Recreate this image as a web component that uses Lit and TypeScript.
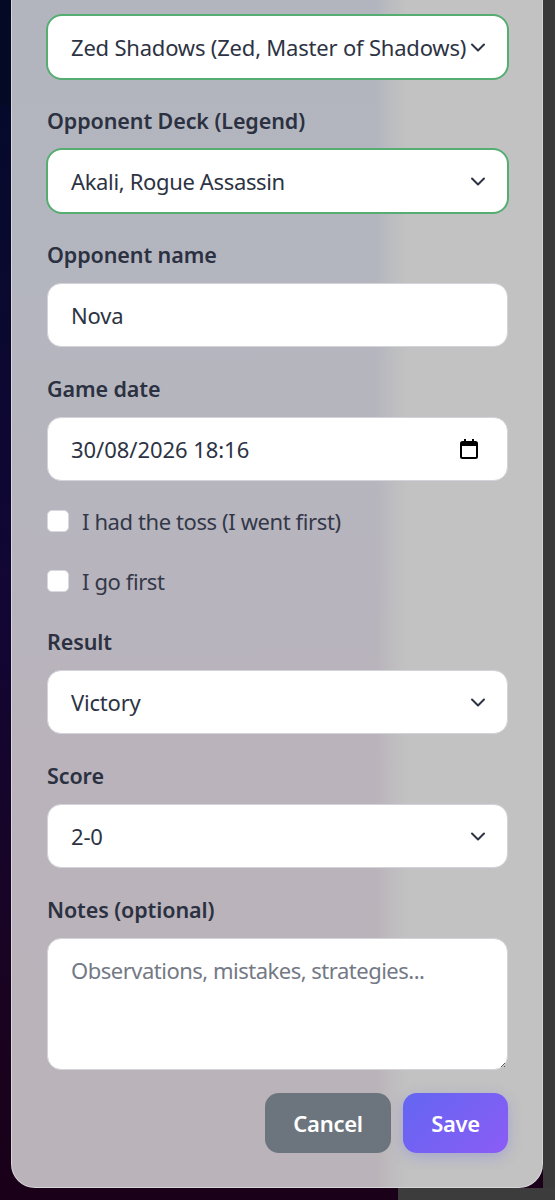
import { LitElement, html, css } from "lit";
import { customElement } from "lit/decorators.js";

const chevron = html`<svg class="chev" viewBox="0 0 16 16" width="16" height="16" fill="none" stroke="#2d3343" stroke-width="2" stroke-linecap="round" stroke-linejoin="round"><path d="M2 5.500l6 6 6-6"/></svg>`;

@customElement("app-root")
export class AppRoot extends LitElement {
  static styles = css`
    :host { display: block; width: 555px; height: 1200px; overflow: hidden; position: relative;
      font-family: "Noto Sans", "Open Sans", sans-serif; color: #2d3343;
      background:
        linear-gradient(90deg, transparent 0 543px, #3a3a3a 543px),
        linear-gradient(180deg, #050a24 0 105px, #050a2c 105px, #120635 50%, #1a0320 85%, #1a0018 100%); }
    .bottomright { position: absolute; left: 398px; right: 0; top: 1188px; bottom: 0; background: #3c3c3c; }
    .modal { position: relative; box-sizing: border-box; width: 532px; margin: -27px 0 0 11px; height: 1215px; padding: 0 34px 0 35px;
      border: 1px solid #d6d6da; border-top: 0; border-radius: 0 0 24px 24px;
      background:
        linear-gradient(90deg, rgba(194,194,194,0) 0 364px, rgba(194,194,194,0.6) 380px, #c2c2c2 396px),
        linear-gradient(180deg, #b2b5be 0, #b4b6bf 300px, #b7b4bd 600px, #bab3bb 800px, #bab3b9 1215px); }
    label { display: block; font-size: 21.5px; font-weight: 600; line-height: 28px; margin: 0 0 14px; color: #2b3141; letter-spacing: -0.1px; }
    .field { margin-bottom: 28px; }
    .ctl { box-sizing: border-box; display: flex; align-items: center; justify-content: space-between; height: 64px; width: 461px;
      padding: 0 21px 0 23px; background: #fff; border-radius: 14px; border: 1px solid #d3d4da; font-size: 22px; letter-spacing: -0.2px; line-height: 30px; color: #2d3343; white-space: nowrap; }
    .ok { height: 66px; margin: -1px 0 -1px -1px; width: 463px; border: 2px solid #55ad72; border-radius: 16px; }
    .akali { letter-spacing: -0.35px; }
    .datetext { letter-spacing: -0.05px; }
    .date { padding-right: 26px; }
    .chev { flex: none; }
    .checks { margin-top: -3px; margin-bottom: 32px; display: flex; flex-direction: column; gap: 30px; }
    .check { display: flex; align-items: center; gap: 13px; font-size: 22px; letter-spacing: -0.4px; line-height: 30px; color: #333849; height: 30px; }
    .box { box-sizing: border-box; width: 22px; height: 22px; background: #fff; border-radius: 5px; border: 1px solid #d8d8de; flex: none; }
    .area { box-sizing: border-box; height: 132px; width: 461px; background: #fff; border-radius: 14px; border: 1px solid #d3d4da; padding: 16px 23px;
      font-size: 22px; letter-spacing: -0.5px; line-height: 30px; color: #737985; position: relative; }
    .grip { position: absolute; right: 1px; bottom: 1px; }
    .actions { display: flex; justify-content: flex-end; gap: 12px; margin-top: 23px; }
    button { border: 0; height: 60px; border-radius: 14px; font: 600 22px "Noto Sans", sans-serif; letter-spacing: -0.3px; color: #fff; padding: 0; }
    .cancel { width: 126px; background: #6c757d; }
    .save { width: 105px; background: linear-gradient(135deg, #6366f1, #8b5cf6); box-shadow: 0 4px 14px rgba(99,102,241,0.3); }
  `;

  render() {
    return html`
      <div class="bottomright"></div>
      <div class="modal">
        <div class="field"><label>My Deck</label>
          <div class="ctl ok"><span>Zed Shadows (Zed, Master of Shadows)</span>${chevron}</div></div>
        <div class="field"><label>Opponent Deck (Legend)</label>
          <div class="ctl ok"><span class="akali">Akali, Rogue Assassin</span>${chevron}</div></div>
        <div class="field"><label>Opponent name</label>
          <div class="ctl"><span>Nova</span></div></div>
        <div class="field"><label>Game date</label>
          <div class="ctl date"><span class="datetext">30/08/2026 18:16</span>
            <svg viewBox="0 0 24 24" width="24" height="24" fill="#000"><path d="M7 2v2H5.500A2.500 2.500 0 0 0 3 6.500v13A2.500 2.500 0 0 0 5.500 22h13a2.500 2.500 0 0 0 2.500-2.500v-13A2.500 2.500 0 0 0 18.500 4H17V2h-2v2H9V2H7zm-2 7h14v10.500a.5.5 0 0 1-.5.5h-13a.5.5 0 0 1-.5-.5V9z"/></svg></div></div>
        <div class="checks">
          <div class="check"><span class="box"></span><span>I had the toss (I went first)</span></div>
          <div class="check"><span class="box"></span><span>I go first</span></div>
        </div>
        <div class="field"><label>Result</label>
          <div class="ctl"><span>Victory</span>${chevron}</div></div>
        <div class="field"><label>Score</label>
          <div class="ctl"><span>2-0</span>${chevron}</div></div>
        <div><label>Notes (optional)</label>
          <div class="area">Observations, mistakes, strategies...
            <svg class="grip" width="8" height="8" viewBox="0 0 8 8" stroke="#555" stroke-width="1"><path d="M7 3L3 7M7 6L6 7"/></svg></div></div>
        <div class="actions"><button class="cancel">Cancel</button><button class="save">Save</button></div>
      </div>`;
  }
}
